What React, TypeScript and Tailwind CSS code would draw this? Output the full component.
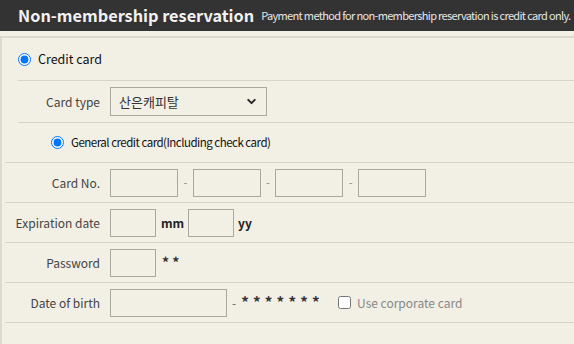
import { ChevronDown } from "lucide-react";

const font = "font-['Noto_Sans_CJK_KR','Noto_Sans',sans-serif]";

function Box({ w }: { w: string }) {
  return <div className={`${w} h-[28px] border border-[#a9a89f] bg-[#f2efe5]`} />;
}

function Row({ label, children }: { label: string; children: React.ReactNode }) {
  return (
    <div className="h-[40px] border-t border-[#d6d3c9] flex items-center">
      <div className="w-[95px] text-right text-[12px] text-[#444]">{label}</div>
      <div className="ml-[10px] flex items-center">{children}</div>
    </div>
  );
}

function Dash() {
  return <span className="w-[14.7px] text-center text-[11px] text-[#888]">-</span>;
}

export default function App() {
  return (
    <div className={`w-[574px] h-[344px] overflow-hidden bg-[#f2efe5] ${font}`}>
      <div className="h-[31px] bg-[#333333] flex items-center pl-[18px] whitespace-nowrap">
        <h1 className="text-[16.3px] font-bold text-[#f2f2f2]">Non-membership reservation</h1>
        <span className="ml-[7px] text-[11px] tracking-[-0.66px] text-[#e6e6e6]">
          Payment method for non-membership reservation is credit card only.
        </span>
      </div>

      <div className="mt-[5px] border-l-2 border-t-2 border-[#dcd9d0] h-[400px]">
        <div className="h-[42px] flex items-center pl-[16px]">
          <input type="radio" defaultChecked className="w-[13px] h-[13px] m-0" />
          <span className="ml-[7px] text-[12.5px] text-[#111]">Credit card</span>
        </div>

        <div className="ml-[16px]">
          <div className="h-[42px] border-t border-[#d6d3c9] flex items-center">
            <div className="w-[82px] text-right text-[12px] text-[#444]">Card type</div>
            <div className="ml-[10px] w-[157px] h-[29px] border border-[#a9a89f] flex items-center justify-between pl-[8px] pr-[8px]">
              <span className="text-[13px] text-[#333]">산은캐피탈</span>
              <ChevronDown size={13} strokeWidth={3.5} className="text-[#222]" />
            </div>
          </div>
          <div className="h-[40px] border-t border-[#d6d3c9] flex items-center pl-[33px]">
            <input type="radio" defaultChecked className="w-[13px] h-[13px] m-0" />
            <span className="ml-[7px] text-[11.5px] tracking-[-0.5px] text-[#111]">
              General credit card(Including check card)
            </span>
          </div>
        </div>

        <div className="ml-[3px]">
          <Row label="Card No.">
            <Box w="w-[68px]" />
            <Dash />
            <Box w="w-[68px]" />
            <Dash />
            <Box w="w-[68px]" />
            <Dash />
            <Box w="w-[68px]" />
          </Row>
          <Row label="Expiration date">
            <Box w="w-[46px]" />
            <span className="ml-[5px] w-[27px] text-[12px] font-bold text-[#222]">mm</span>
            <Box w="w-[46px]" />
            <span className="ml-[4px] text-[12px] font-bold text-[#222]">yy</span>
          </Row>
          <Row label="Password">
            <Box w="w-[46px]" />
            <span className="ml-[6px] text-[14px] font-bold text-[#333]">* *</span>
          </Row>
          <div className="border-b border-[#d6d3c9]">
            <Row label="Date of birth">
              <Box w="w-[117px]" />
              <span className="ml-[5px] text-[12px] text-[#666]">-</span>
              <span className="ml-[5px] text-[15px] font-bold text-[#333] tracking-[0.4px]">* * * * * * *</span>
              <label className="ml-[18px] flex items-center">
                <input type="checkbox" className="w-[13px] h-[13px] m-0" />
                <span className="ml-[6px] text-[12px] text-[#888]">Use corporate card</span>
              </label>
            </Row>
          </div>
        </div>
      </div>
    </div>
  );
}
